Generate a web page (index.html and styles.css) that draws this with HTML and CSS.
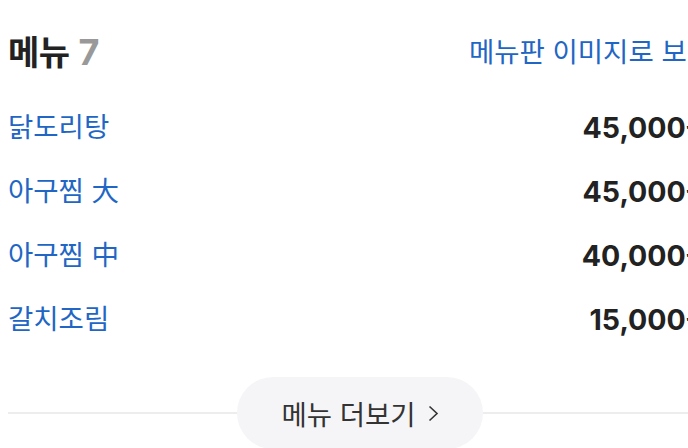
FILE: index.html
```html
<!DOCTYPE html>
<html lang="ko">
<head>
<meta charset="utf-8">
<link rel="stylesheet" href="styles.css">
</head>
<body>
<div class="page">
  <div class="header">
    <h2 class="title">메뉴 <span class="count">7</span></h2>
    <a class="board-link">메뉴판 이미지로 보기</a>
  </div>
  <ul class="menu-list">
    <li class="menu-item"><span class="name">닭도리탕</span><span class="price">45,000원</span></li>
    <li class="menu-item"><span class="name">아구찜 大</span><span class="price">45,000원</span></li>
    <li class="menu-item"><span class="name">아구찜 中</span><span class="price">40,000원</span></li>
    <li class="menu-item"><span class="name">갈치조림</span><span class="price">15,000원</span></li>
  </ul>
  <div class="more-wrap">
    <button class="more-btn">메뉴 더보기
      <svg class="chev" width="11" height="17" viewBox="0 0 11 17"><polyline points="1.5,1.5 9,8.5 1.5,15.5" fill="none" stroke="#333" stroke-width="1.6"/></svg>
    </button>
  </div>
</div>
</body>
</html>
```

FILE: styles.css
```css
html, body {
  margin: 0;
  padding: 0;
  background: #fff;
  overflow: hidden;
  width: 688px;
  height: 448px;
}
.page {
  width: 704px;
  padding-left: 8px;
  font-family: "Noto Sans CJK KR", "Noto Sans", sans-serif;
}
.header {
  display: flex;
  justify-content: space-between;
  align-items: center;
  height: 44px;
  padding-top: 28px;
}
.title {
  margin: 0;
  font-size: 34px;
  font-weight: 700;
  color: #222;
  letter-spacing: -0.5px;
}
.count {
  font-family: Inter, "Noto Sans", sans-serif;
  font-size: 36px;
  color: #999;
}
.board-link {
  font-size: 27.5px;
  color: #2166c4;
}
.menu-list {
  list-style: none;
  margin: 21px 0 0;
  padding: 0;
}
.menu-item {
  display: flex;
  justify-content: space-between;
  align-items: center;
  height: 64px;
}
.name {
  font-size: 27.5px;
  color: #2166c4;
}
.price {
  font-family: Inter, "Noto Sans CJK KR", sans-serif;
  font-size: 28.5px;
  font-weight: 700;
  color: #222;
}
.more-wrap {
  display: flex;
  align-items: center;
  margin-top: 28px;
}
.more-wrap::before, .more-wrap::after {
  content: "";
  flex: 1;
  height: 2px;
  background: #ededed;
}
.more-btn {
  display: flex;
  align-items: center;
  justify-content: center;
  gap: 12px;
  width: 246px;
  height: 72px;
  border: none;
  border-radius: 36px;
  background: #f5f5f7;
  font-family: "Noto Sans CJK KR", sans-serif;
  font-size: 27.5px;
  color: #333;
  padding: 0;
}
```
